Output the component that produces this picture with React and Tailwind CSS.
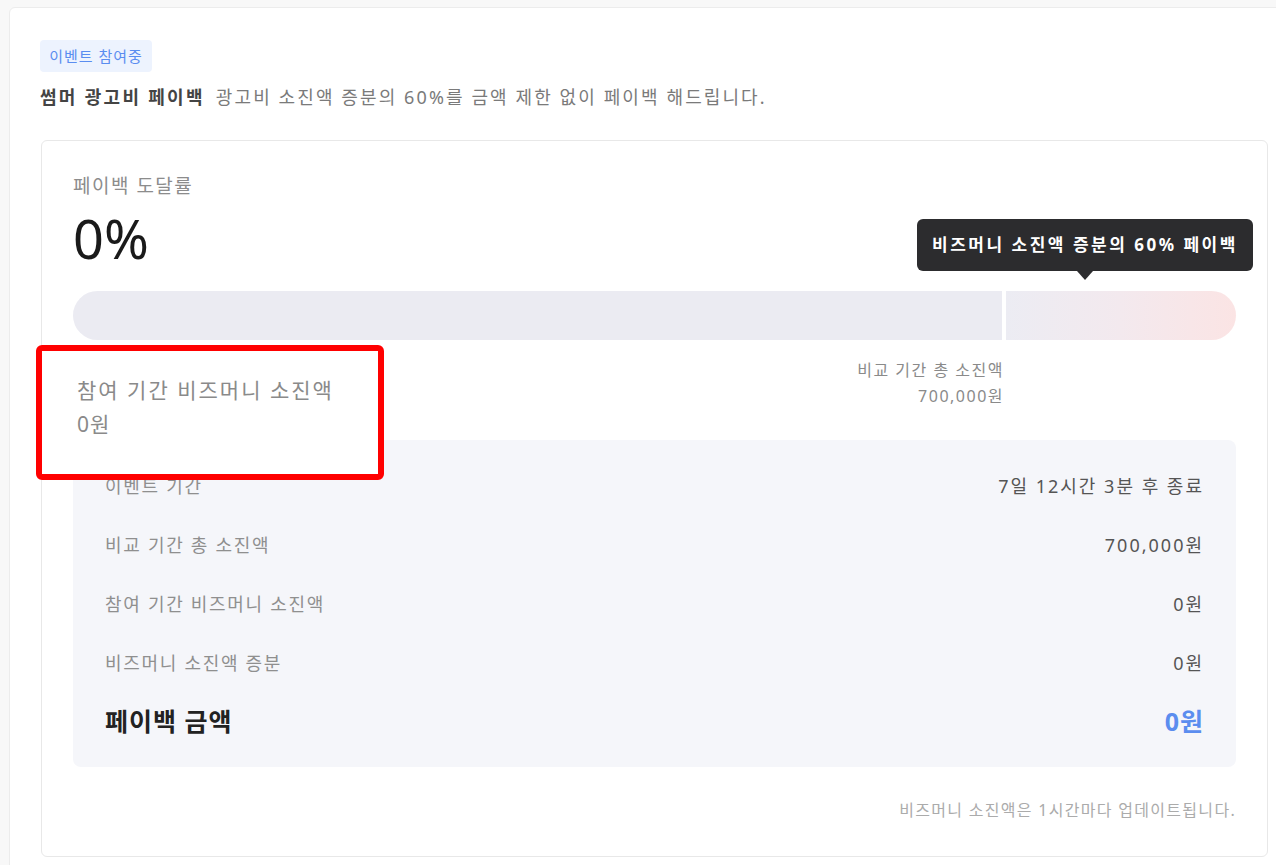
import React from "react";

const FONT = { fontFamily: '"Noto Sans", "Noto Sans CJK KR", sans-serif' };

function Row({ label, value }) {
  return (
    <div className="flex h-[59px] items-center justify-between">
      <span className="text-[18px] leading-[26px] tracking-[1.7px] text-[#8f8f8f]">{label}</span>
      <span className="text-[18px] leading-[26px] tracking-[2px] text-[#555555]">{value}</span>
    </div>
  );
}

export default function App() {
  return (
    <div className="h-[865px] w-full overflow-hidden bg-[#f8f8f8]" style={FONT}>
      <div className="ml-[9px] mt-[7px] h-[900px] w-[1290px] rounded-tl-[6px] border border-[#ececec] bg-white pl-[30px] pt-[32px]">
        <div className="flex h-[32px] w-[112px] items-center justify-center rounded-[4px] bg-[#edf3fe] text-[15px] tracking-[1px] text-[#5a8df0]">
          이벤트 참여중
        </div>
        <div className="mt-[12px] flex h-[26px] items-center">
          <span className="text-[18px] font-semibold tracking-[2.3px] text-[#444444]">썸머 광고비 페이백</span>
          <span className="ml-[11px] text-[18px] tracking-[2.1px] text-[#7a7a7a]">
            광고비 소진액 증분의 60%를 금액 제한 없이 페이백 해드립니다.
          </span>
        </div>

        <div className="relative ml-[1px] mt-[30px] w-[1227px] rounded-[6px] border border-[#e8e8e8] bg-white px-[31px] pb-[35px] pt-[32px]">
          <div className="text-[19px] leading-[26px] tracking-[1.5px] text-[#8c8c8c]">페이백 도달률</div>
          <div className="mt-[9px] text-[54px] leading-[60px] text-[#1a1a1a]">0%</div>

          <div className="mt-[23px] flex h-[49px] w-full">
            <div className="h-full w-[929px] rounded-l-full bg-[#ebebf2]" />
            <div className="ml-[4px] h-full flex-1 rounded-r-full bg-gradient-to-r from-[#ececf3] via-[#f3e9ee] to-[#fbe4e4]" />
          </div>

          <div className="mt-[17px] flex w-[931px] flex-col items-end">
            <div className="text-[16px] leading-[26px] tracking-[1.5px] text-[#8a8a8a]">비교 기간 총 소진액</div>
            <div className="text-[16px] leading-[26px] tracking-[1.5px] text-[#8a8a8a]">700,000원</div>
          </div>

          <div className="mt-[31px] rounded-[8px] bg-[#f5f6fa] px-[32px] py-[16px]">
            <Row label="이벤트 기간" value="7일 12시간 3분 후 종료" />
            <Row label="비교 기간 총 소진액" value="700,000원" />
            <Row label="참여 기간 비즈머니 소진액" value="0원" />
            <Row label="비즈머니 소진액 증분" value="0원" />
            <div className="flex h-[59px] items-center justify-between">
              <span className="text-[25px] font-bold tracking-[1px] text-[#222222]">페이백 금액</span>
              <span className="text-[25px] font-bold tracking-[1px] text-[#5b8def]">0원</span>
            </div>
          </div>

          <div className="mt-[32px] text-right text-[16px] leading-[22px] tracking-[1.3px] text-[#ababab]">
            비즈머니 소진액은 1시간마다 업데이트됩니다.
          </div>

          {/* tooltip */}
          <div className="absolute left-[875px] top-[78px] flex h-[52px] w-[336px] items-center justify-center rounded-[6px] bg-[#2c2c2e] text-[17px] font-bold tracking-[2.5px] text-white">
            비즈머니 소진액 증분의 60% 페이백
            <div className="absolute left-1/2 top-full h-0 w-0 -translate-x-1/2 border-x-[8px] border-t-[9px] border-x-transparent border-t-[#2c2c2e]" />
          </div>

          {/* highlight callout */}
          <div className="absolute left-[-6px] top-[204px] h-[135px] w-[348px] rounded-[6px] border-[6px] border-[#ff0000] bg-white pl-[35px] pt-[22px]">
            <div className="text-[21px] leading-[34px] tracking-[2px] text-[#8a8a8a]">참여 기간 비즈머니 소진액</div>
            <div className="text-[21px] leading-[34px] tracking-[1px] text-[#8a8a8a]">0원</div>
          </div>
        </div>
      </div>
    </div>
  );
}
